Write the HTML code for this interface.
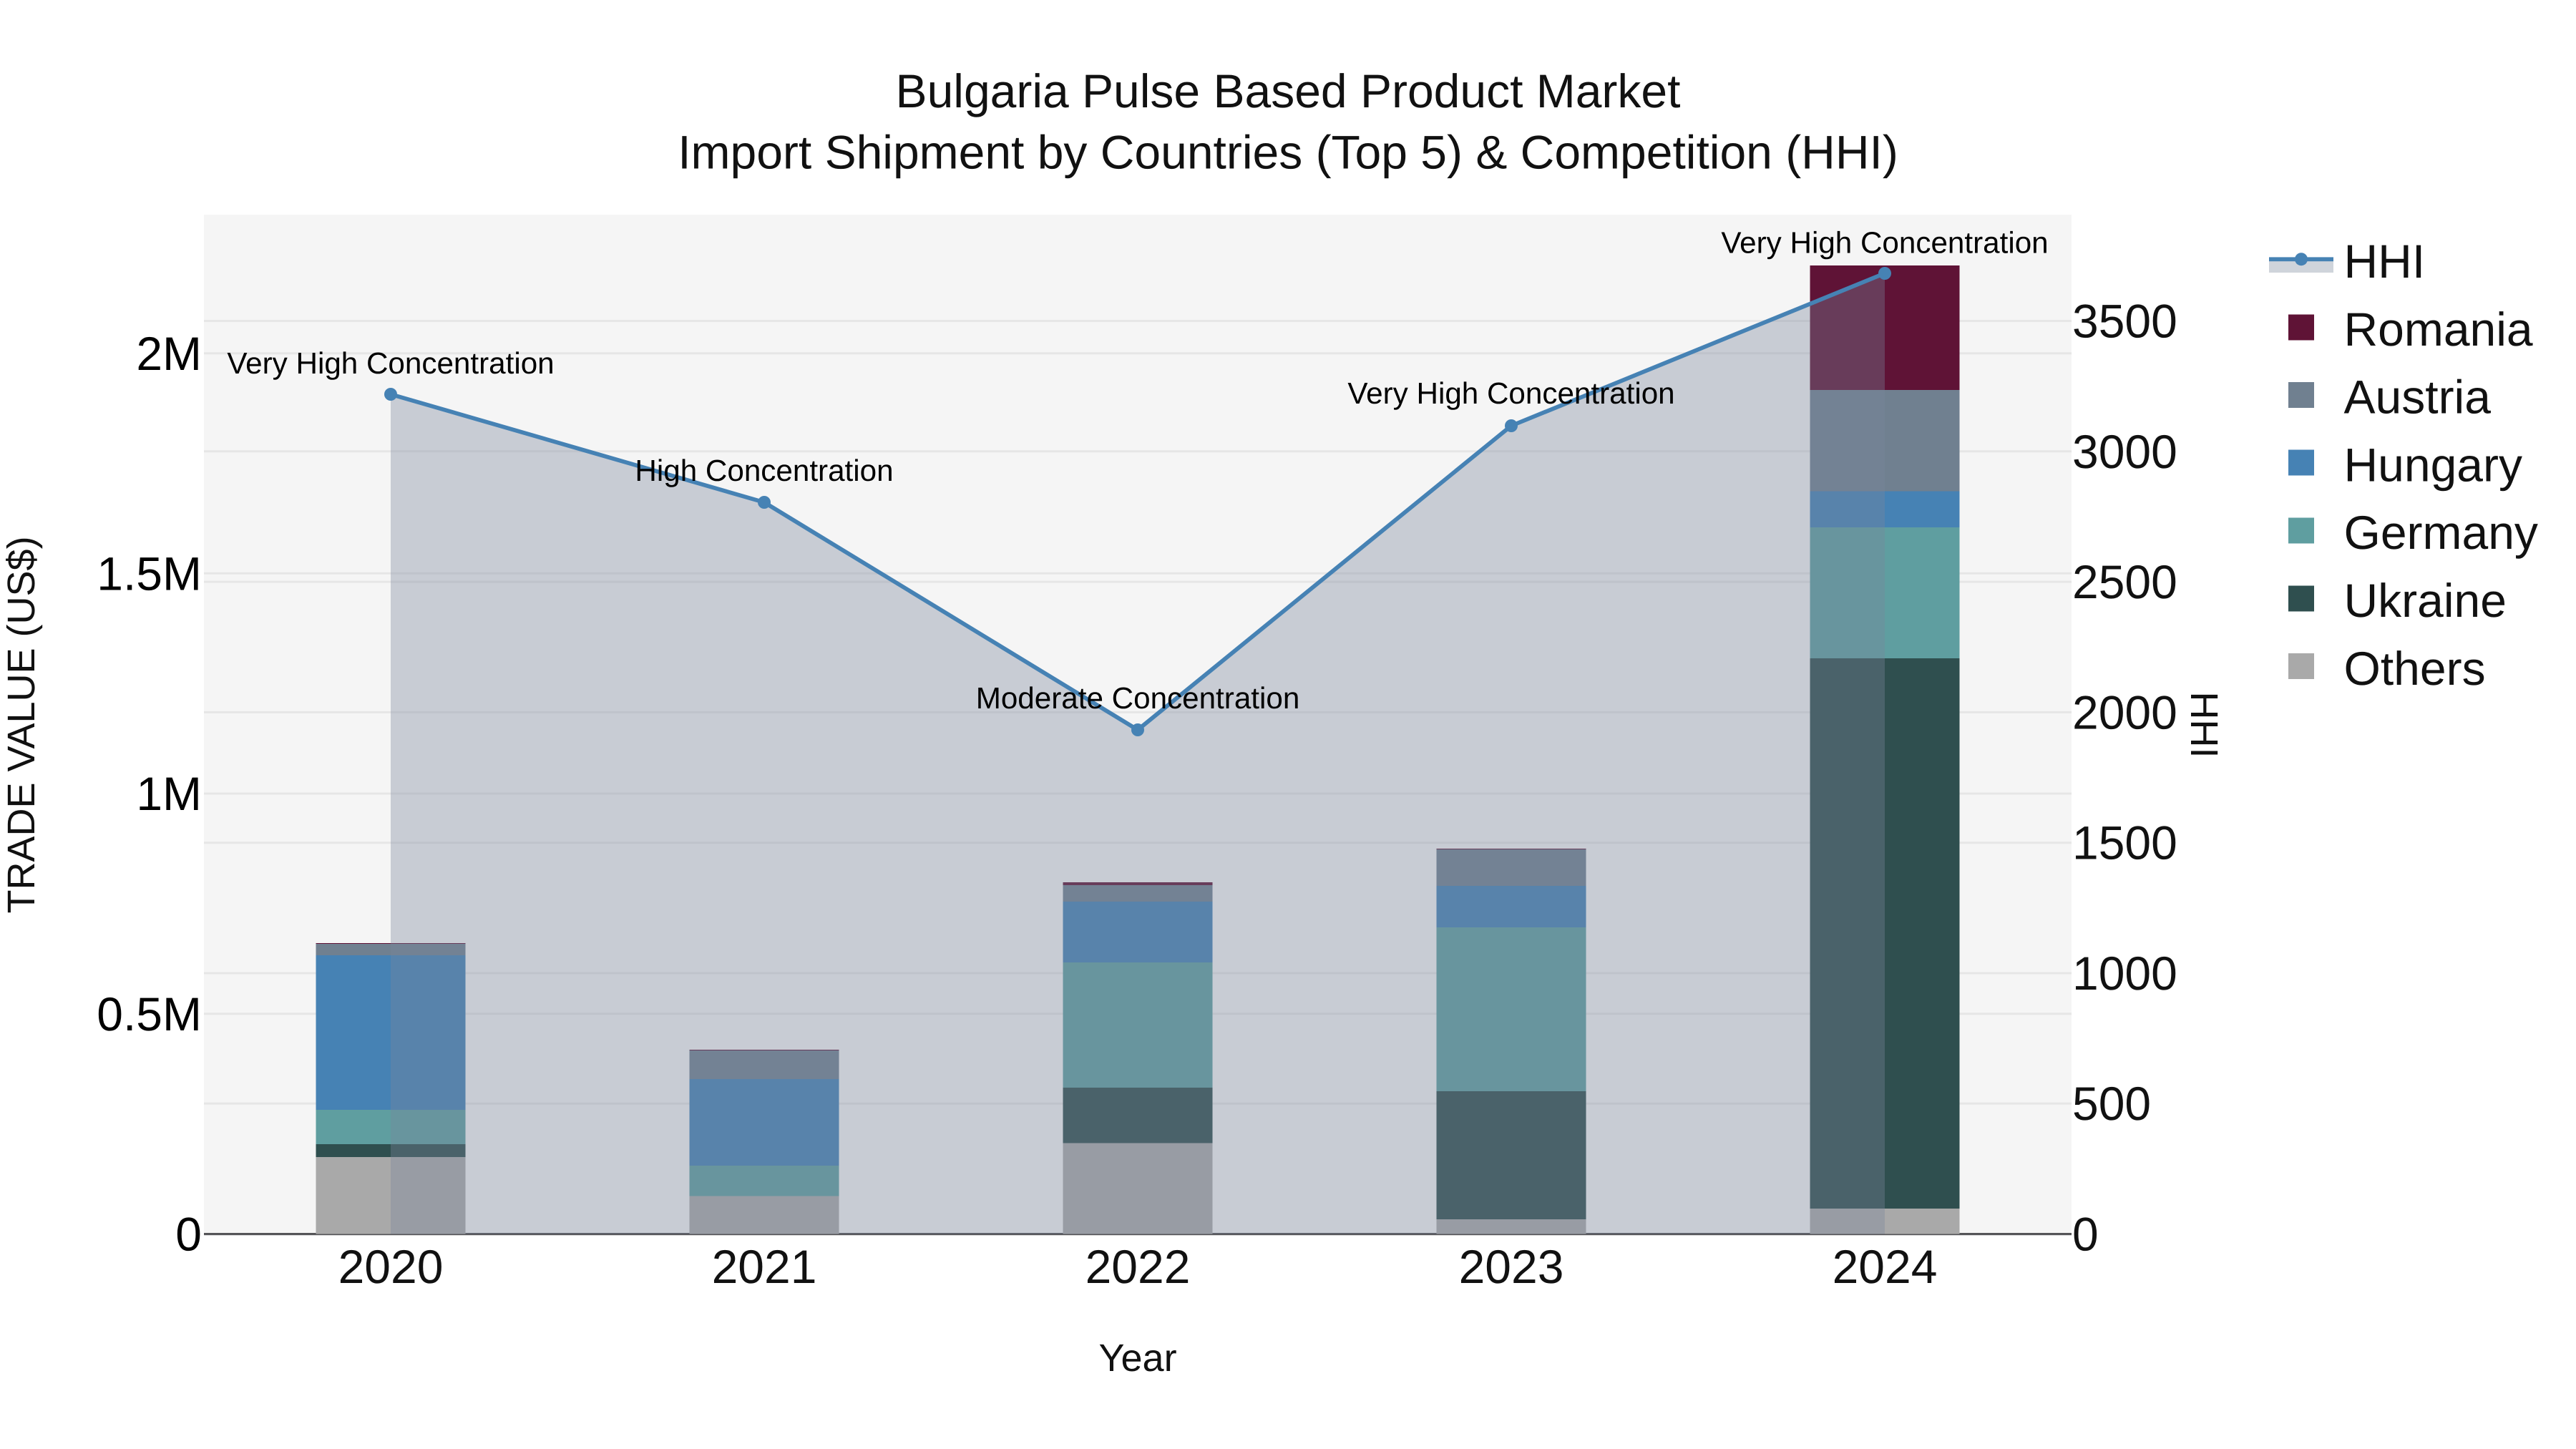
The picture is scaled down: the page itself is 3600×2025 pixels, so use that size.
<!DOCTYPE html>
<html lang="en">
<head>
<meta charset="utf-8">
<title>Bulgaria Pulse Based Product Market</title>
<style>
html,body{margin:0;padding:0;background:#fff;width:3600px;height:2025px;overflow:hidden}
svg{display:block}
text{font-family:"Liberation Sans",Arial,sans-serif;text-rendering:geometricPrecision}
.t{font-size:66px;fill:#111}
.tk{font-size:66px;fill:#111}
.tl{font-size:66px;fill:#000}
.lg{font-size:66px;fill:#111}
.an{font-size:42.2px;fill:#000}
.ax{font-size:54px;fill:#111}
</style>
</head>
<body>
<svg width="3600" height="2025" viewBox="0 0 3600 2025" xmlns="http://www.w3.org/2000/svg">
<rect width="3600" height="2025" fill="#fff"/>
<rect x="285" y="300" width="2610" height="1425" fill="#f5f5f5"/>

<!-- gridlines -->
<g stroke="#e6e6e6" stroke-width="3" fill="none">
<path d="M285 493.7H2895M285 801.2H2895M285 1109H2895M285 1416.8H2895"/>
<path d="M285 448.5H2895M285 630.8H2895M285 813.1H2895M285 995.4H2895M285 1177.7H2895M285 1360H2895M285 1542.2H2895"/>
</g>

<!-- axis line -->
<rect x="285" y="1723" width="2610" height="3.2" fill="#555558"/>

<!-- bars -->
<g shape-rendering="crispEdges">
<!-- 2020 -->
<rect x="441.6" y="1617.2" width="208.8" height="107.3" fill="#A9A9A9"/>
<rect x="441.6" y="1599" width="208.8" height="18.2" fill="#2F4F4F"/>
<rect x="441.6" y="1551" width="208.8" height="48" fill="#5F9EA0"/>
<rect x="441.6" y="1335" width="208.8" height="216" fill="#4682B4"/>
<rect x="441.6" y="1319" width="208.8" height="16" fill="#708090"/>
<rect x="441.6" y="1318" width="208.8" height="1" fill="#5f1336"/>
<!-- 2021 -->
<rect x="963.6" y="1671.6" width="208.8" height="52.9" fill="#A9A9A9"/>
<rect x="963.6" y="1629" width="208.8" height="42.6" fill="#5F9EA0"/>
<rect x="963.6" y="1508" width="208.8" height="121" fill="#4682B4"/>
<rect x="963.6" y="1468" width="208.8" height="40" fill="#708090"/>
<rect x="963.6" y="1467" width="208.8" height="1" fill="#5f1336"/>
<!-- 2022 -->
<rect x="1485.6" y="1597.7" width="208.8" height="126.8" fill="#A9A9A9"/>
<rect x="1485.6" y="1520" width="208.8" height="77.7" fill="#2F4F4F"/>
<rect x="1485.6" y="1345" width="208.8" height="175" fill="#5F9EA0"/>
<rect x="1485.6" y="1260" width="208.8" height="85" fill="#4682B4"/>
<rect x="1485.6" y="1237" width="208.8" height="23" fill="#708090"/>
<rect x="1485.6" y="1233" width="208.8" height="4" fill="#5f1336"/>
<!-- 2023 -->
<rect x="2007.6" y="1704" width="208.8" height="20.5" fill="#A9A9A9"/>
<rect x="2007.6" y="1525" width="208.8" height="179" fill="#2F4F4F"/>
<rect x="2007.6" y="1296" width="208.8" height="229" fill="#5F9EA0"/>
<rect x="2007.6" y="1238" width="208.8" height="58" fill="#4682B4"/>
<rect x="2007.6" y="1187" width="208.8" height="51" fill="#708090"/>
<rect x="2007.6" y="1186" width="208.8" height="1" fill="#5f1336"/>
<!-- 2024 -->
<rect x="2529.6" y="1688.8" width="208.8" height="35.7" fill="#A9A9A9"/>
<rect x="2529.6" y="920" width="208.8" height="768.8" fill="#2F4F4F"/>
<rect x="2529.6" y="737" width="208.8" height="183" fill="#5F9EA0"/>
<rect x="2529.6" y="686.7" width="208.8" height="50.3" fill="#4682B4"/>
<rect x="2529.6" y="545" width="208.8" height="141.7" fill="#708090"/>
<rect x="2529.6" y="371" width="208.8" height="174" fill="#5f1336"/>
</g>

<!-- HHI area + line -->
<polygon points="546,551 1068,702 1590,1020 2112,595 2634,382 2634,1724.5 546,1724.5" fill="rgb(122,133,155)" fill-opacity="0.36"/>
<polyline points="546,551 1068,702 1590,1020 2112,595 2634,382" fill="none" stroke="#4682B4" stroke-width="5.8" stroke-linejoin="round"/>
<g fill="#4682B4">
<circle cx="546" cy="551" r="9"/>
<circle cx="1068" cy="702" r="9"/>
<circle cx="1590" cy="1020" r="9"/>
<circle cx="2112" cy="595" r="9"/>
<circle cx="2634" cy="382" r="9"/>
</g>

<!-- annotations -->
<g text-anchor="middle">
<text class="an" x="546" y="522">Very High Concentration</text>
<text class="an" x="1068" y="672">High Concentration</text>
<text class="an" x="1590" y="990">Moderate Concentration</text>
<text class="an" x="2112" y="564">Very High Concentration</text>
<text class="an" x="2634" y="353.5">Very High Concentration</text>
</g>

<!-- title -->
<text class="t" x="1800" y="150" text-anchor="middle">Bulgaria Pulse Based Product Market</text>
<text class="t" x="1800" y="235.5" text-anchor="middle">Import Shipment by Countries (Top 5) &amp; Competition (HHI)</text>

<!-- left ticks -->
<g text-anchor="end">
<text class="tl" x="282" y="1747.5">0</text>
<text class="tl" x="282" y="1440">0.5M</text>
<text class="tl" x="282" y="1132">1M</text>
<text class="tl" x="282" y="824.5">1.5M</text>
<text class="tl" x="282" y="517">2M</text>
</g>

<!-- right ticks -->
<g>
<text class="tk" x="2896" y="1747.5">0</text>
<text class="tk" x="2896" y="1565.2">500</text>
<text class="tk" x="2896" y="1383">1000</text>
<text class="tk" x="2896" y="1200.7">1500</text>
<text class="tk" x="2896" y="1018.4">2000</text>
<text class="tk" x="2896" y="836.1">2500</text>
<text class="tk" x="2896" y="653.8">3000</text>
<text class="tk" x="2896" y="471.5">3500</text>
</g>

<!-- x ticks -->
<g text-anchor="middle">
<text class="tk" x="546" y="1793">2020</text>
<text class="tk" x="1068" y="1793">2021</text>
<text class="tk" x="1590" y="1793">2022</text>
<text class="tk" x="2112" y="1793">2023</text>
<text class="tk" x="2634" y="1793">2024</text>
</g>

<!-- axis titles -->
<text class="ax" x="1590" y="1916" text-anchor="middle">Year</text>
<text class="ax" transform="translate(48 1013) rotate(-90)" text-anchor="middle">TRADE VALUE (US$)</text>
<text class="ax" transform="translate(3062 1013) rotate(90)" text-anchor="middle">HHI</text>

<!-- legend -->
<rect x="3171" y="362" width="90" height="19" fill="#cfd4db"/>
<rect x="3171" y="359.4" width="90" height="5.8" fill="#4682B4"/>
<circle cx="3216" cy="362.2" r="9" fill="#4682B4"/>
<g shape-rendering="crispEdges">
<rect x="3198" y="439.3" width="36" height="36" fill="#5f1336"/>
<rect x="3198" y="534" width="36" height="36" fill="#708090"/>
<rect x="3198" y="628.7" width="36" height="36" fill="#4682B4"/>
<rect x="3198" y="723.4" width="36" height="36" fill="#5F9EA0"/>
<rect x="3198" y="818.3" width="36" height="36" fill="#2F4F4F"/>
<rect x="3198" y="913.2" width="36" height="36" fill="#A9A9A9"/>
</g>
<text class="lg" x="3275.5" y="388">HHI</text>
<text class="lg" x="3275.5" y="482.8">Romania</text>
<text class="lg" x="3275.5" y="577.6">Austria</text>
<text class="lg" x="3275.5" y="672.4">Hungary</text>
<text class="lg" x="3275.5" y="767.2">Germany</text>
<text class="lg" x="3275.5" y="862">Ukraine</text>
<text class="lg" x="3275.5" y="956.8">Others</text>
</svg>
</body>
</html>
